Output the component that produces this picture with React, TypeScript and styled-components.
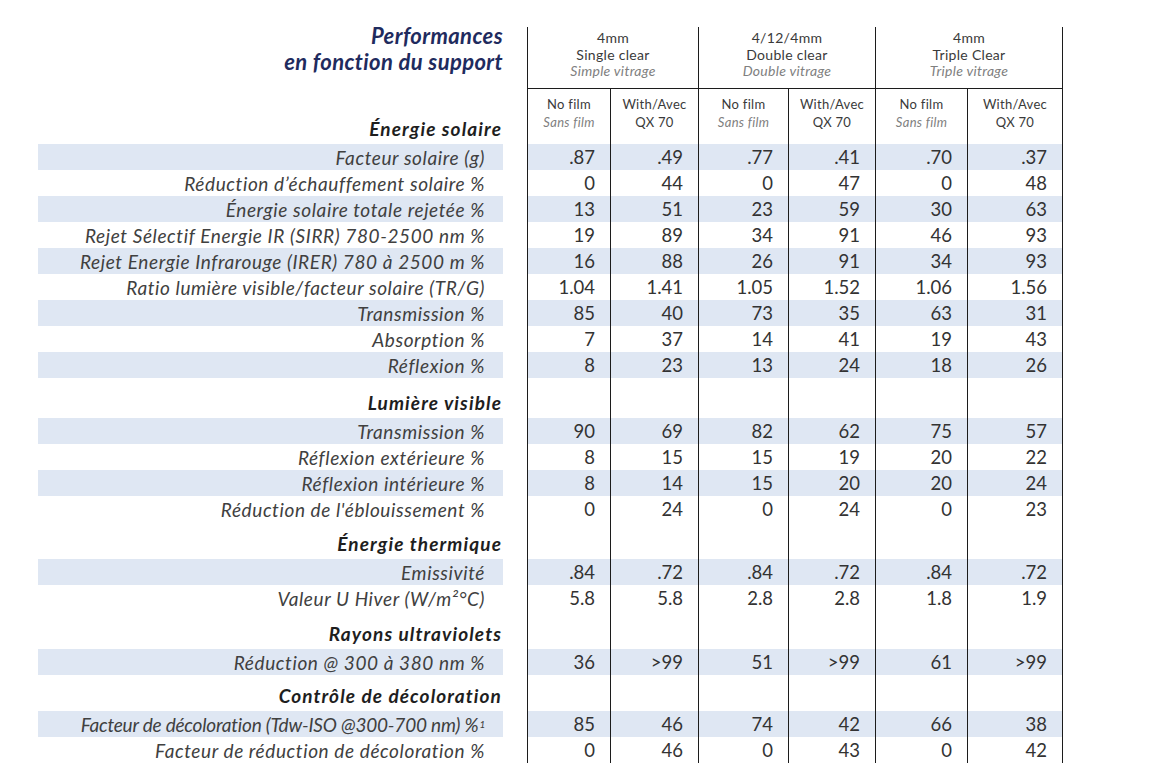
import styled, { createGlobalStyle } from "styled-components";

const GlobalStyle = createGlobalStyle`
  body {
    margin: 0;
    background: #ffffff;
    font-family: Lato, "Open Sans", sans-serif;
    color: #333333;
  }
`;

const COLS = "465px 24px 83px 88px 90px 87px 92px 96px";
const BAND = "#dfe7f3";
const LINE = "#1c1c1c";

const Sheet = styled.div`
  width: 1162px;
  padding: 27px 0 0 38px;
  box-sizing: border-box;
`;

const Row = styled.div<{ $h: number }>`
  display: grid;
  grid-template-columns: ${COLS};
  height: ${(p) => p.$h}px;
`;

const TitleCell = styled.div`
  grid-column: 1 / 3;
  margin-top: -4px;
  padding: 0 24px 0 0;
  text-align: right;
  font-size: 22px;
  font-weight: 700;
  font-style: italic;
  line-height: 26px;
  color: #1f2b5e;
  letter-spacing: 0.4px;
`;

const GroupHead = styled.div<{ $last?: boolean }>`
  grid-column: span 2;
  border-left: 1px solid ${LINE};
  border-right: ${(p) => (p.$last ? `1px solid ${LINE}` : "none")};
  border-bottom: 1px solid ${LINE};
  display: flex;
  flex-direction: column;
  align-items: center;
  padding-top: 3px;
  font-size: 14px;
  line-height: 16.5px;
  letter-spacing: 0.3px;
  color: #3a3a3a;
`;

const SubHead = styled.div<{ $last?: boolean }>`
  border-left: 1px solid ${LINE};
  border-right: ${(p) => (p.$last ? `1px solid ${LINE}` : "none")};
  display: flex;
  flex-direction: column;
  align-items: center;
  padding-top: 6px;
  font-size: 13px;
  line-height: 18px;
  letter-spacing: 0.3px;
  color: #3a3a3a;
`;

const Faint = styled.span`
  font-style: italic;
  color: #808080;
`;

const SectionCell = styled.div`
  display: flex;
  align-items: flex-end;
  justify-content: flex-end;
  padding: 0 1px 4px 0;
  font-size: 19px;
  font-weight: 700;
  font-style: italic;
  letter-spacing: 1.1px;
  color: #1e1e1e;
`;

const Label = styled.div<{ $shade: boolean; $tight?: boolean }>`
  display: flex;
  align-items: center;
  justify-content: flex-end;
  padding-right: 18px;
  background: ${(p) => (p.$shade ? BAND : "transparent")};
  font-size: 19px;
  font-style: italic;
  color: #404040;
  letter-spacing: ${(p) => (p.$tight ? "-0.2px" : "0.6px")};
  white-space: nowrap;
`;

const Sup = styled.sup`
  font-size: 10px;
  margin-left: 1px;
  vertical-align: 7px;
  line-height: 0;
`;

const Value = styled.div<{ $shade: boolean; $last?: boolean }>`
  display: flex;
  align-items: center;
  justify-content: flex-end;
  padding-right: 15px;
  background: ${(p) => (p.$shade ? BAND : "transparent")};
  border-left: 1px solid ${LINE};
  border-right: ${(p) => (p.$last ? `1px solid ${LINE}` : "none")};
  font-size: 18.5px;
  color: #333333;
`;

const Blank = styled.div<{ $last?: boolean }>`
  border-left: 1px solid ${LINE};
  border-right: ${(p) => (p.$last ? `1px solid ${LINE}` : "none")};
`;

type Line = { label: string; values: string[]; sup?: string; tight?: boolean };
type Section = { title: string; h: number; lines: Line[] };

const sections: Section[] = [
  {
    title: "Énergie solaire",
    h: 55,
    lines: [
      { label: "Facteur solaire (g)", values: [".87", ".49", ".77", ".41", ".70", ".37"] },
      { label: "Réduction d’échauffement solaire %", values: ["0", "44", "0", "47", "0", "48"] },
      { label: "Énergie solaire totale rejetée %", values: ["13", "51", "23", "59", "30", "63"] },
      { label: "Rejet Sélectif Energie IR (SIRR) 780-2500 nm %", values: ["19", "89", "34", "91", "46", "93"] },
      { label: "Rejet Energie Infrarouge (IRER) 780 à 2500 m %", values: ["16", "88", "26", "91", "34", "93"] },
      { label: "Ratio lumière visible/facteur solaire (TR/G)", values: ["1.04", "1.41", "1.05", "1.52", "1.06", "1.56"] },
      { label: "Transmission %", values: ["85", "40", "73", "35", "63", "31"] },
      { label: "Absorption %", values: ["7", "37", "14", "41", "19", "43"] },
      { label: "Réflexion %", values: ["8", "23", "13", "24", "18", "26"] },
    ],
  },
  {
    title: "Lumière visible",
    h: 40,
    lines: [
      { label: "Transmission %", values: ["90", "69", "82", "62", "75", "57"] },
      { label: "Réflexion extérieure %", values: ["8", "15", "15", "19", "20", "22"] },
      { label: "Réflexion intérieure %", values: ["8", "14", "15", "20", "20", "24"] },
      { label: "Réduction de l'éblouissement %", values: ["0", "24", "0", "24", "0", "23"] },
    ],
  },
  {
    title: "Énergie thermique",
    h: 37,
    lines: [
      { label: "Emissivité", values: [".84", ".72", ".84", ".72", ".84", ".72"] },
      { label: "Valeur U Hiver (W/m²°C)", values: ["5.8", "5.8", "2.8", "2.8", "1.8", "1.9"] },
    ],
  },
  {
    title: "Rayons ultraviolets",
    h: 38,
    lines: [{ label: "Réduction @ 300 à 380 nm %", values: ["36", ">99", "51", ">99", "61", ">99"] }],
  },
  {
    title: "Contrôle de décoloration",
    h: 36,
    lines: [
      {
        label: "Facteur de décoloration (Tdw-ISO @300-700 nm) %",
        sup: "1",
        tight: true,
        values: ["85", "46", "74", "42", "66", "38"],
      },
      { label: "Facteur de réduction de décoloration %", values: ["0", "46", "0", "43", "0", "42"] },
    ],
  },
];

const groups = [
  { size: "4mm", en: "Single clear", fr: "Simple vitrage" },
  { size: "4/12/4mm", en: "Double clear", fr: "Double vitrage" },
  { size: "4mm", en: "Triple Clear", fr: "Triple vitrage" },
];

const cols = [0, 1, 2, 3, 4, 5];

const App = (): JSX.Element => {
  return (
    <>
      <GlobalStyle />
      <Sheet>
        <Row $h={62}>
          <TitleCell>
            Performances
            <br />
            en fonction du support
          </TitleCell>
          {groups.map((g, i) => (
            <GroupHead key={i} $last={i === 2}>
              <span>{g.size}</span>
              <span>{g.en}</span>
              <Faint>{g.fr}</Faint>
            </GroupHead>
          ))}
        </Row>
        {sections.map((s, si) => (
          <div key={s.title}>
            <Row $h={s.h}>
              <SectionCell>{s.title}</SectionCell>
              <div />
              {si === 0
                ? cols.map((c) =>
                    c % 2 === 0 ? (
                      <SubHead key={c}>
                        <span>No film</span>
                        <Faint>Sans film</Faint>
                      </SubHead>
                    ) : (
                      <SubHead key={c} $last={c === 5}>
                        <span>With/Avec</span>
                        <span>QX 70</span>
                      </SubHead>
                    )
                  )
                : cols.map((c) => <Blank key={c} $last={c === 5} />)}
            </Row>
            {s.lines.map((l, li) => {
              const shade = li % 2 === 0;
              return (
                <Row $h={26} key={l.label}>
                  <Label $shade={shade} $tight={l.tight}>
                    {l.label}
                    {l.sup && <Sup>{l.sup}</Sup>}
                  </Label>
                  <div />
                  {l.values.map((v, vi) => (
                    <Value key={vi} $shade={shade} $last={vi === 5}>
                      {v}
                    </Value>
                  ))}
                </Row>
              );
            })}
          </div>
        ))}
      </Sheet>
    </>
  );
};

export default App;
